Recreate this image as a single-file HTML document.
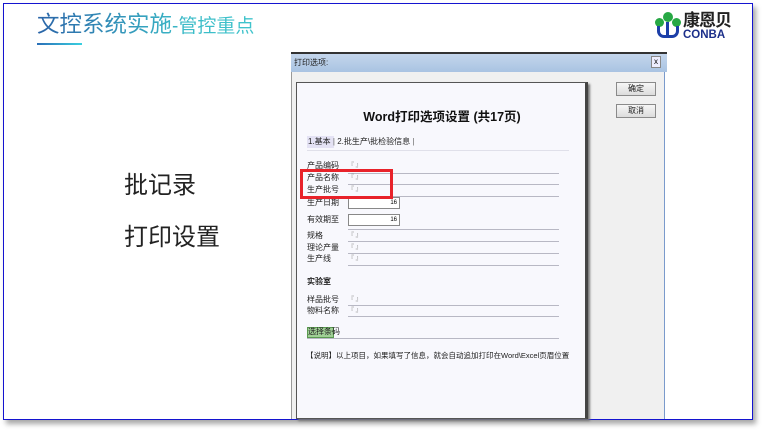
<!DOCTYPE html>
<html><head><meta charset="utf-8"><style>
*{margin:0;padding:0;box-sizing:border-box}
body{width:762px;height:430px;background:#fff;position:relative;overflow:hidden;font-family:"Liberation Sans","Noto Sans CJK SC",sans-serif}
.a{position:absolute}
.frame{left:3px;top:3px;width:750px;height:417px;border:1.5px solid #1414d0;box-shadow:3px 4px 5px rgba(0,0,0,.35);background:#fff}
.lbl{position:absolute;left:307px;font-size:8px;color:#222;line-height:10px;white-space:nowrap}
.ln{position:absolute;left:348px;width:211px;height:1px;background:#b8b8c4}
.br{position:absolute;left:348px;font-size:6px;color:#888}
.inp{position:absolute;left:348px;width:52px;height:12px;background:#fff;border:1px solid #888;font-size:6px;text-align:right;padding-right:2px;line-height:10px}
.btn{position:absolute;left:616px;width:40px;height:14px;background:linear-gradient(#f6f6f6,#dcdcdc);border:1px solid #8a8a8a;font-size:8px;text-align:center;line-height:12px;color:#222}
.ttl{background:linear-gradient(90deg,#2a64a8,#3bbcc8 70%,#40c4cc);-webkit-background-clip:text;background-clip:text;color:transparent}
</style></head><body>
<div class="a frame"></div>
<div class="a ttl" style="left:37px;top:10px;font-size:22.5px;white-space:nowrap;line-height:30px">文控系统实施<span style="font-size:19px">-管控重点</span></div>
<div class="a" style="left:37px;top:43px;width:45px;height:2px;background:linear-gradient(90deg,#2a6fb8,#39d0e0)"></div>
<!-- logo -->
<div class="a" style="left:655px;top:12px;width:26px;height:28px">
 <div class="a" style="left:8px;top:0;width:10px;height:10px;border-radius:50%;background:#27a844"></div>
 <div class="a" style="left:0;top:6px;width:9px;height:9px;border-radius:50%;background:#27a844"></div>
 <div class="a" style="left:17px;top:6px;width:9px;height:9px;border-radius:50%;background:#27a844"></div>
 <div class="a" style="left:2px;top:14px;width:22px;height:12px;border:3px solid #1c3fa8;border-top:none;border-radius:0 0 7px 7px"></div>
 <div class="a" style="left:11px;top:10px;width:3px;height:15px;background:#1c3fa8"></div>
</div>
<div class="a" style="left:683px;top:11px;font-size:17px;font-weight:bold;color:#222;letter-spacing:-1px;line-height:20px">康恩贝</div>
<div class="a" style="left:683px;top:29px;font-size:11.5px;font-weight:bold;color:#1c2f8a;line-height:12px">CONBA</div>
<!-- left text -->
<div class="a" style="left:124px;top:172px;font-size:24px;color:#222;line-height:28px">批记录</div>
<div class="a" style="left:124px;top:224px;font-size:24px;color:#222;line-height:28px">打印设置</div>
<!-- dialog -->
<div class="a" style="left:291px;top:52px;width:373px;height:367px;background:#f0f0f0;border-left:1px solid #999"></div>
<div class="a" style="left:291px;top:52px;width:376px;height:20px;background:linear-gradient(#c4d6ec,#a9c3e2);border-top:2px solid #333"></div>
<div class="a" style="left:294px;top:57px;font-size:8px;color:#222">打印选项:</div>
<div class="a" style="left:651px;top:56px;width:10px;height:12px;border:1px solid #888;background:#eef;font-size:8px;text-align:center;line-height:10px">x</div>
<div class="a" style="left:664px;top:72px;width:1px;height:347px;background:#7a9acc"></div>
<div class="btn" style="top:82px">确定</div>
<div class="btn" style="top:104px">取消</div>
<!-- panel -->
<div class="a" style="left:296px;top:82px;width:292px;height:337px;background:#f8f8fd;border:1px solid #555;border-right:3px solid #444;box-shadow:2px 2px 2px #777"></div>
<div class="a" style="left:296px;top:106px;width:292px;text-align:center;font-size:12.5px;font-weight:bold;color:#111">Word打印选项设置 (共17页)</div>
<div class="a" style="left:307px;top:136px;width:27px;height:12px;background:#e4e2f4"></div>
<div class="lbl" style="top:137px;left:308px">1.基本 <span style="color:#666">|</span> 2.批生产\批检验信息 <span style="color:#666">|</span></div>
<div class="a" style="left:307px;top:150px;width:262px;height:1px;background:#e0e0ea"></div>
<div class="lbl" style="top:161px">产品编码</div><div class="br" style="top:160px">『 』</div><div class="ln" style="top:173px"></div>
<div class="lbl" style="top:173px">产品名称</div><div class="br" style="top:172px">『 』</div><div class="ln" style="top:184px"></div>
<div class="lbl" style="top:185px">生产批号</div><div class="br" style="top:184px">『 』</div><div class="ln" style="top:196px"></div>
<div class="lbl" style="top:198px">生产日期</div><div class="inp" style="top:197px">16</div>
<div class="lbl" style="top:215px">有效期至</div><div class="inp" style="top:214px">16</div>
<div class="ln" style="top:229px"></div>
<div class="lbl" style="top:231px">规格</div><div class="br" style="top:230px">『 』</div><div class="ln" style="top:241px"></div>
<div class="lbl" style="top:243px">理论产量</div><div class="br" style="top:242px">『 』</div><div class="ln" style="top:253px"></div>
<div class="lbl" style="top:254px">生产线</div><div class="br" style="top:253px">『 』</div><div class="ln" style="top:265px"></div>
<div class="lbl" style="top:277px;font-weight:bold">实验室</div>
<div class="lbl" style="top:295px">样品批号</div><div class="br" style="top:294px">『 』</div><div class="ln" style="top:305px"></div>
<div class="lbl" style="top:306px">物料名称</div><div class="br" style="top:305px">『 』</div><div class="ln" style="top:316px"></div>
<div class="a" style="left:307px;top:327px;width:27px;height:11px;background:#9fcf95;border:1px solid #5a9a50"></div>
<div class="lbl" style="top:327px;left:308px">选择条码</div>
<div class="a" style="left:307px;top:338px;width:252px;height:1px;background:#b8b8c4"></div>
<div class="lbl" style="top:351px;left:306px;font-size:7.5px">【说明】以上项目，如果填写了信息，就会自动追加打印在Word\Excel页眉位置</div>
<!-- red box -->
<div class="a" style="left:300px;top:169px;width:93px;height:30px;border:3px solid #e8222a"></div>
</body></html>
